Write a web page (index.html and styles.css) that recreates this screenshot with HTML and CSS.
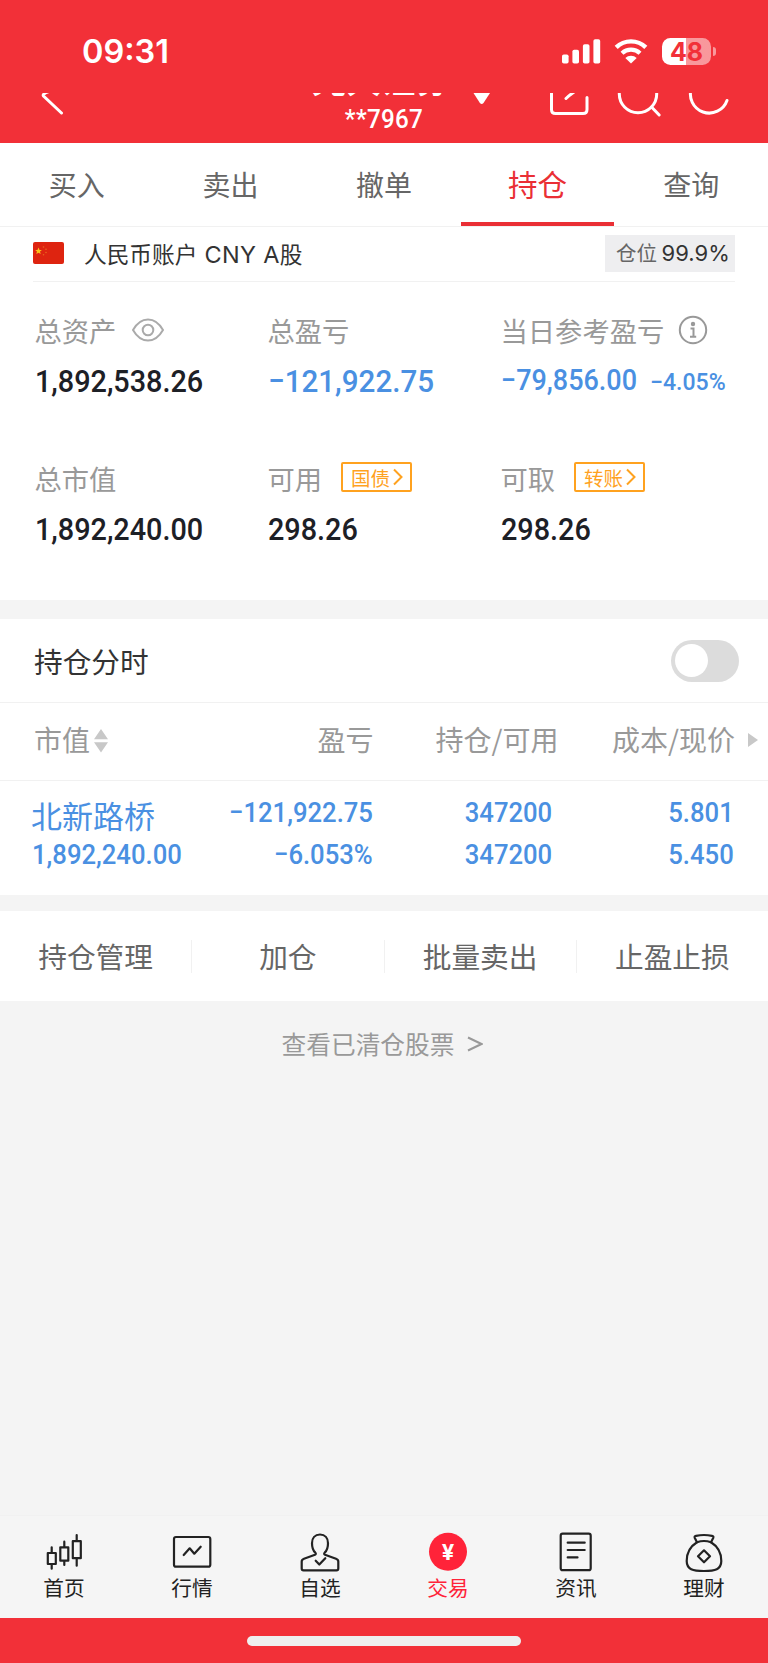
FILE: index.html
```html
<!doctype html>
<html lang="zh-CN">
<head>
    <meta charset="UTF-8">
    <meta name="viewport" content="width=device-width, initial-scale=1.0">
    <title>持仓</title>
    <link rel="stylesheet" href="styles.css">
</head>
<body>
    <header>
        <div class="status-bar">
            <span class="time">09:31</span>
            <svg class="signal" viewBox="0 0 39 25">
                <rect x="0" y="15.5" width="6.6" height="9" rx="1.8"/>
                <rect x="10.4" y="10.7" width="6.6" height="13.8" rx="1.8"/>
                <rect x="20.9" y="5.3" width="6.6" height="19.2" rx="1.8"/>
                <rect x="31.4" y="0.3" width="6.8" height="24.2" rx="1.8"/>
            </svg>
            <svg class="wifi" viewBox="0 0 34 25">
                <path d="M2.2 8.4a21.2 21.2 0 0 1 29.6 0" stroke-width="4.4"/>
                <path d="M8 14.3a13 13 0 0 1 18 0" stroke-width="4.2"/>
                <path class="fill" d="M11.3 19a8.6 8.6 0 0 1 11.4 0L17 24.6z"/>
            </svg>
            <div class="battery"><span>48</span></div>
            <i class="battery-cap"></i>
        </div>
        <div class="nav-bar">
            <svg class="back" viewBox="36 93 40 30"><path d="M49 91.500Q42 94 43.500 96L61.500 113"/></svg>
            <div class="account-name">
                <div class="broker">光大证券</div>
                <div class="number">**7967</div>
            </div>
            <svg class="caret" viewBox="472 93 20 30"><path d="M473.500 93h16.500l-6.500 10q-1.800 2-3.600 0z"/></svg>
            <svg class="tools" viewBox="548 93 184 30">
                <path d="M551.500 88v21.500q0 4 4 4h27.500q4 0 4-4v-12"/>
                <path d="M566 98.500Q569 95.500 574 92"/>
                <circle cx="638" cy="94" r="18.700"/>
                <path d="M651.500 107l7.700 8"/>
                <path d="M691.500 88a18.600 18.600 0 0 0 35.500 12.500"/>
            </svg>
        </div>
    </header>

    <nav class="tabs">
        <a>买入</a>
        <a>卖出</a>
        <a>撤单</a>
        <a class="active">持仓</a>
        <a>查询</a>
    </nav>

    <main>
        <section class="account">
            <svg class="flag" viewBox="0 0 31 22">
                <rect width="31" height="22" rx="2" fill="#de2410"/>
                <path d="M5.500 5.500l1 2.400 2.400.1-1.900 1.600.7 2.500-2.200-1.400-2.200 1.400.7-2.500L2.100 8l2.400-.1z" fill="#fbc21b"/>
                <g fill="#e8641f">
                    <circle cx="10.500" cy="5" r=".8"/>
                    <circle cx="13" cy="7.300" r=".8"/>
                    <circle cx="13" cy="10.500" r=".8"/>
                    <circle cx="10.500" cy="12.800" r=".8"/>
                </g>
            </svg>
            <span class="account-title">人民币账户 <i>CNY A</i>股</span>
            <span class="position">仓位 <b>99.9%</b></span>
        </section>

        <section class="summary">
            <div>
                <div class="label">总资产
                    <svg class="eye" viewBox="0 0 32 24">
                        <path d="M1 12Q7 1.500 16 1.500T31 12Q25 22.500 16 22.500T1 12z"/>
                        <circle cx="16" cy="12" r="5.300"/>
                    </svg>
                </div>
                <div class="value"><span class="num">1,892,538.26</span></div>
            </div>
            <div>
                <div class="label">总盈亏</div>
                <div class="value blue"><span class="num wide">−121,922.75</span></div>
            </div>
            <div>
                <div class="label">当日参考盈亏
                    <svg class="info" viewBox="0 0 30 30">
                        <circle cx="15" cy="15" r="13.200"/>
                        <circle class="dot" cx="15" cy="9" r="2.200"/>
                        <path d="M12.500 13.500h3v8M12 21.800h6.200"/>
                    </svg>
                </div>
                <div class="value blue day"><span class="num">−79,856.00</span><span class="num rate">−4.05%</span></div>
            </div>
            <div>
                <div class="label">总市值</div>
                <div class="value"><span class="num">1,892,240.00</span></div>
            </div>
            <div>
                <div class="label">可用
                    <span class="link">国债<svg viewBox="0 0 10 18"><path d="M1 1.500L8.500 9L1 16.500"/></svg></span>
                </div>
                <div class="value"><span class="num">298.26</span></div>
            </div>
            <div>
                <div class="label">可取
                    <span class="link">转账<svg viewBox="0 0 10 18"><path d="M1 1.500L8.500 9L1 16.500"/></svg></span>
                </div>
                <div class="value"><span class="num">298.26</span></div>
            </div>
        </section>

        <section class="chart-switch">
            <span>持仓分时</span>
            <i class="toggle"></i>
        </section>

        <section class="holdings">
            <div class="row head">
                <span>市值<svg class="sort" viewBox="0 0 14 24"><path d="M7 0l7 10.300H0zM0 13.300h14L7 23.600z"/></svg></span>
                <span>盈亏</span>
                <span>持仓/可用</span>
                <span>成本/现价</span>
                <svg class="more" viewBox="0 0 10 14"><path d="M0 0l10 7-10 7z"/></svg>
            </div>
            <div class="row stock">
                <div><span class="name">北新路桥</span><span class="num">1,892,240.00</span></div>
                <div><span class="num">−121,922.75</span><span class="num">−6.053%</span></div>
                <div><span class="num">347200</span><span class="num">347200</span></div>
                <div><span class="num">5.801</span><span class="num">5.450</span></div>
            </div>
        </section>

        <section class="actions">
            <a>持仓管理</a>
            <a>加仓</a>
            <a>批量卖出</a>
            <a>止盈止损</a>
        </section>

        <a class="cleared"><span>查看已清仓股票</span><svg viewBox="0 0 16 16"><path d="M1 1.500L14.500 8L1 14.500"/></svg></a>
    </main>

    <footer>
        <a>
            <svg viewBox="0 0 48 44">
                <path d="M7.800 23h8v11h-8zM11.700 17.300V23M11.700 34v4.700M20.300 17.300h8v13.400h-8zM24.300 11.700v5.600M24.300 30.700V35M32.800 11.200h8v17h-8zM36.700 5v6M36.700 28.300v7.400"/>
            </svg>
            首页
        </a>
        <a>
            <svg viewBox="0 0 48 44">
                <rect x="6" y="7" width="36.300" height="29.700" rx="2"/>
                <path d="M15.700 25l6-6.700 4.600 5.400 6.400-7"/>
            </svg>
            行情
        </a>
        <a>
            <svg viewBox="0 0 48 44">
                <path d="M19.300 22.600C17 20.500 16 17 16 13.200C16 8 19 4.500 24 4.500S32 8 32 13.200C32 17 31 20.500 28.700 22.600Q27.500 24 29 24.700L40 28.700Q42.300 29.500 42.300 31.500V38.500Q42.300 40.300 40.500 40.300H7.500Q5.700 40.300 5.700 38.500V31.500Q5.700 29.500 8 28.700L19 24.700Q20.500 24 19.300 22.600z"/>
                <path d="M19.700 30.700l3.600 3.800 6-6.300"/>
            </svg>
            自选
        </a>
        <a class="active">
            <svg viewBox="0 0 48 44">
                <circle cx="24" cy="21.800" r="19"/>
                <text x="24" y="30" text-anchor="middle">¥</text>
            </svg>
            交易
        </a>
        <a>
            <svg viewBox="0 0 48 44">
                <rect x="8.700" y="3.700" width="30" height="36.500" rx="2"/>
                <path d="M15.700 12.700h17M15.700 20h17M15.700 27.400h9.800"/>
            </svg>
            资讯
        </a>
        <a>
            <svg viewBox="0 0 48 44">
                <path d="M17 12.300L14.800 8Q14 6.200 16 5.800Q24 4.200 32 5.800Q34 6.200 33.200 8L31 12.300"/>
                <path d="M17 12.300Q24 9.700 31 12.300C37 16 41.300 22.500 41.300 31C41.300 39.500 35 41 24 41S6.700 39.500 6.700 31C6.700 22.500 11 16 17 12.300z"/>
                <path d="M24 20.300l6 6-6 6-6-6z"/>
            </svg>
            理财
        </a>
    </footer>
    <div class="home-area"><i></i></div>
</body>
</html>
```
FILE: styles.css
```css
:root {
    --cl-red: #f23038;
    --cl-blue: #4a90e2;
    --cl-text: #333;
    --cl-gray: #999;
    --cl-band: #f4f4f4;
    --cl-line: #f1f1f1;
    --cl-orange: #ffa21f;
}

* {
    box-sizing: border-box;
}

body {
    font-family: 'Noto Sans CJK SC', sans-serif;
    color: var(--cl-text);
    background: var(--cl-band);
    margin: 0;
    width: 768px;
    height: 1663px;
    display: flex;
    flex-direction: column;
}

svg {
    fill: none;
    flex: none;
}

header {
    background: var(--cl-red);
    height: 143px;
    color: white;
}

.status-bar {
    height: 93px;
    display: flex;
    align-items: center;
    padding: 9px 0 0 82px;
}

.time {
    font: 600 32.500px/40px Inter, sans-serif;
    width: 479.500px;
    padding-top: 2px;
}

.signal {
    width: 39px;
    height: 25px;
    fill: white;
}

.wifi {
    width: 34px;
    height: 25px;
    margin: 0 14px 0 13.500px;
    stroke: white;
}

.wifi .fill {
    fill: white;
    stroke: none;
}

.battery {
    width: 49px;
    height: 27px;
    border-radius: 8.500px;
    background: linear-gradient(90deg, white 49%, rgba(255, 255, 255, 0.5) 49%);
    font: 700 25px/28px Inter, sans-serif;
    color: var(--cl-red);
    text-align: center;
}

.battery-cap {
    width: 3.500px;
    height: 9px;
    margin-left: 1.500px;
    border-radius: 0 4px 4px 0;
    background: rgba(255, 255, 255, 0.5);
}

.nav-bar {
    height: 50px;
    display: flex;
    overflow: hidden;
    padding-left: 36px;
}

.nav-bar svg {
    height: 30px;
    stroke: white;
    stroke-width: 3;
    stroke-linecap: round;
}

.nav-bar .back {
    width: 40px;
}

.account-name {
    width: 200px;
    margin: -33px 0 0 208px;
    text-align: center;
}

.broker {
    font-size: 34.500px;
    font-weight: 500;
    line-height: 36px;
    margin-right: 6px;
}

.number {
    font: 500 25.500px/28px Roboto, sans-serif;
    letter-spacing: 0.300px;
    margin-top: 9px;
    transform: scaleX(0.95);
}

.nav-bar .caret {
    width: 20px;
    margin-left: -12px;
    fill: white;
    stroke: none;
}

.nav-bar .tools {
    width: 184px;
    margin-left: 56px;
}

.tabs {
    height: 84px;
    display: flex;
    background: white;
    border-bottom: solid 1px var(--cl-line);
}

.tabs a {
    flex: 1;
    text-align: center;
    font-size: 28px;
    line-height: 83px;
    color: #666;
}

.tabs .active {
    color: #ea2f35;
    font-size: 29.500px;
    line-height: 81px;
    border-bottom: solid 4px #ea2f35;
}

main {
    height: 1288px;
}

main section {
    background: white;
}

.account {
    display: flex;
    align-items: center;
    height: 55px;
    padding: 0 33px 3px;
}

.flag {
    width: 31px;
    height: 22px;
    margin-right: 20px;
}

.account-title {
    flex: 1;
    font-size: 22.700px;
}

.account-title i {
    font: 400 23.500px Inter, sans-serif;
    letter-spacing: 0.300px;
    margin-left: 2px;
}

.position {
    width: 130px;
    height: 37px;
    padding-left: 11px;
    background: #eeeef0;
    font-size: 20.500px;
    line-height: 34px;
    color: #666;
    white-space: nowrap;
}

.position b {
    font: 400 22px Inter, sans-serif;
    color: var(--cl-text);
}

.summary {
    display: grid;
    grid-template-columns: 233px 233px 1fr;
    grid-template-rows: 148px 122px;
    height: 318px;
    padding: 28px 0 0 34.500px;
    position: relative;
}

.summary::before {
    content: "";
    position: absolute;
    left: 33px;
    right: 33px;
    top: -1px;
    height: 1px;
    background: var(--cl-line);
}

.label {
    display: flex;
    align-items: center;
    height: 40px;
    font-size: 27.300px;
    line-height: 38px;
    color: var(--cl-gray);
}

.value {
    height: 40px;
    margin-top: 8px;
    font-size: 32px;
    line-height: 40px;
    color: #1d2026;
    white-space: nowrap;
}

/* condensed figures */
.num {
    display: inline-block;
    font-family: Roboto, sans-serif;
    font-weight: 500;
    transform: scaleX(0.9);
    transform-origin: left;
}

.num.wide {
    transform: scaleX(0.925);
}

.blue {
    color: var(--cl-blue);
}

.day {
    font-size: 29px;
    line-height: 39px;
}

.day .num {
    transform: scaleX(0.93);
}

.day .rate {
    font-size: 24px;
    margin-left: 3px;
    transform: scaleX(0.96);
}

.eye {
    width: 32px;
    height: 24px;
    margin-left: 16px;
    stroke: #aaa;
    stroke-width: 2;
}

.info {
    width: 30px;
    height: 30px;
    margin-left: 14px;
    stroke: var(--cl-gray);
    stroke-width: 2;
}

.info .dot {
    fill: var(--cl-gray);
    stroke: none;
}

.link {
    display: flex;
    align-items: center;
    width: 71px;
    height: 30px;
    margin: -2px 0 0 19px;
    padding-left: 8px;
    border: solid 2px var(--cl-orange);
    border-radius: 2px;
    color: var(--cl-orange);
    font-size: 19.500px;
    line-height: 25px;
}

.link svg {
    width: 10px;
    height: 18px;
    margin-left: 3px;
    stroke: var(--cl-orange);
    stroke-width: 2;
}

.chart-switch {
    display: flex;
    align-items: center;
    justify-content: space-between;
    height: 84px;
    margin-top: 19px;
    padding: 0 29px 0 34px;
    border-bottom: solid 1px var(--cl-line);
    font-size: 28.700px;
}

.chart-switch span {
    padding-bottom: 1px;
}

.toggle {
    width: 68px;
    height: 42px;
    padding: 4px 4px;
    border-radius: 21px;
    background: #dcdcdc;
}

.toggle::before {
    content: "";
    display: block;
    width: 33px;
    height: 33px;
    border-radius: 50%;
    background: white;
}

.row {
    display: grid;
    grid-template-columns: 180px 159.500px 185px 176.500px 1fr;
    padding-left: 33px;
    text-align: right;
}

.head {
    height: 78px;
    padding-left: 34px;
    border-bottom: solid 1px var(--cl-line);
    font-size: 28px;
    line-height: 72px;
    color: var(--cl-gray);
}

.row > :first-child {
    text-align: left;
}

.sort {
    width: 14px;
    height: 24px;
    margin-left: 4px;
    fill: #c8c8c8;
    vertical-align: -2px;
}

.more {
    width: 10px;
    height: 14px;
    margin: 30px 0 0 13px;
    fill: #c8c8c8;
}

.stock {
    height: 114px;
    padding-top: 11px;
    color: var(--cl-blue);
    font-size: 28.500px;
}

.stock > div {
    display: flex;
    flex-direction: column;
    align-items: flex-end;
}

.stock > :first-child {
    align-items: flex-start;
}

.stock > :nth-child(3) {
    padding-right: 5px;
}

.stock > :nth-child(4) {
    padding-right: 0;
}

.stock span {
    height: 42px;
    line-height: 42px;
    transform-origin: right;
}

.stock > :first-child .num {
    transform-origin: left;
    margin-left: -1px;
}

.stock .name {
    font-size: 31px;
    line-height: 45px;
    margin-left: -2px;
}

.actions {
    display: flex;
    align-items: center;
    height: 90px;
    margin-top: 16px;
}

.actions a {
    flex: 1;
    height: 33px;
    line-height: 31px;
    font-size: 28.700px;
    text-align: center;
    color: #666;
}

.actions a + a {
    border-left: solid 1px var(--cl-line);
}

.cleared {
    display: flex;
    justify-content: center;
    align-items: center;
    height: 86px;
    padding-right: 3px;
    font-size: 24.700px;
    color: var(--cl-gray);
}

.cleared span {
    padding-bottom: 2px;
}

.cleared svg {
    width: 16px;
    height: 16px;
    margin-left: 13px;
    stroke: var(--cl-gray);
    stroke-width: 2;
}

footer {
    display: flex;
    height: 103px;
    border-top: solid 1px #f1f1f1;
    background: #f5f5f5;
    padding-top: 14px;
}

footer a {
    flex: 1;
    display: flex;
    flex-direction: column;
    align-items: center;
    font-size: 20.700px;
    line-height: 27px;
    color: #222;
}

footer svg {
    width: 48px;
    height: 44px;
    stroke: #222;
    stroke-width: 2.200;
    stroke-linejoin: round;
    stroke-linecap: round;
}

footer .active {
    color: #ff2339;
}

footer .active svg {
    fill: #ff2339;
    stroke: none;
}

footer text {
    font: 700 22px Inter, sans-serif;
    fill: white;
}

.home-area {
    height: 45px;
    padding-top: 18px;
    background: var(--cl-red);
}

.home-area i {
    display: block;
    width: 274px;
    height: 10px;
    margin: 0 auto;
    border-radius: 5px;
    background: #efefef;
}
```
